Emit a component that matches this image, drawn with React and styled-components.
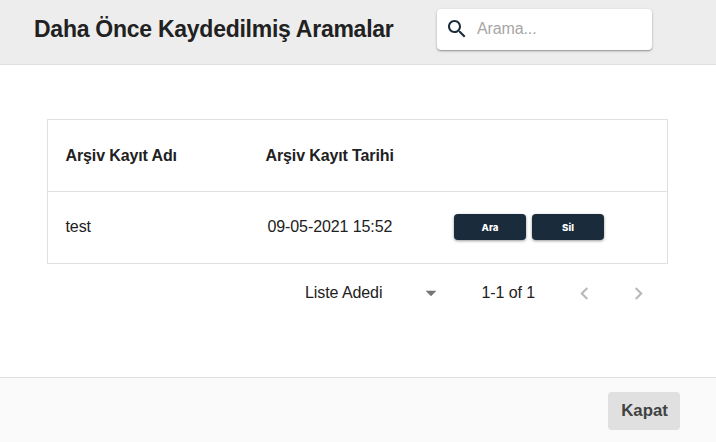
import React from "react";
import styled, { createGlobalStyle } from "styled-components";

const GlobalStyle = createGlobalStyle`
  *, *::before, *::after { box-sizing: border-box; }
  body { margin: 0; font-family: "Liberation Sans", Arial, sans-serif; color: #212121; }
`;

const Dialog = styled.div`
  display: flex;
  flex-direction: column;
  width: 716px;
  height: 442px;
  background: #fff;
  overflow: hidden;
`;

const Header = styled.header`
  display: flex;
  align-items: flex-start;
  height: 65px;
  padding-left: 34px;
  background: #ededed;
  border-bottom: 1px solid #e0e0e0;
`;

const Title = styled.h1`
  margin: 16px 0 0;
  width: 403px;
  font-size: 23px;
  line-height: 27px;
  font-weight: 700;
  letter-spacing: -0.26px;
  white-space: nowrap;
`;

const SearchBox = styled.label`
  display: flex;
  align-items: center;
  gap: 8px;
  width: 215px;
  height: 41px;
  margin-top: 9px;
  padding: 0 0 2px 8px;
  background: #fff;
  border-radius: 4px;
  box-shadow: 0 1px 3px rgba(0, 0, 0, 0.24), 0 1px 1px rgba(0, 0, 0, 0.2);
`;

const SearchInput = styled.input`
  width: 160px;
  padding: 0;
  border: 0;
  outline: 0;
  background: transparent;
  font: 16px "Liberation Sans", Arial, sans-serif;
  letter-spacing: -0.12px;
  &::placeholder { color: #a6a6a6; opacity: 1; }
`;

const Content = styled.main`
  flex: 1;
  padding: 54px 48px 0 47px;
`;

const Table = styled.div`
  border: 1px solid #e0e0e0;
`;

const Row = styled.div`
  display: grid;
  grid-template-columns: 200px 188.5px 1fr;
  align-items: center;
  height: ${(p) => (p.$head ? 71 : 72)}px;
  padding-left: 17.5px;
  padding-bottom: ${(p) => (p.$head ? 0 : 2)}px;
  border-top: ${(p) => (p.$head ? "0" : "1px solid #e0e0e0")};
  font-size: 16px;
  font-weight: ${(p) => (p.$head ? 700 : 400)};
  letter-spacing: ${(p) => (p.$head ? -0.12 : -0.1)}px;
`;

const Cell = styled.div`
  padding-left: ${(p) => p.$indent || 0}px;
  white-space: nowrap;
`;

const Actions = styled.div`
  display: flex;
  gap: 6px;
`;

const ActionButton = styled.button`
  width: 72px;
  height: 26px;
  padding: 2px 0 0;
  border: 0;
  border-radius: 4px;
  background: #1a2b3c;
  color: #fff;
  font: 800 9.6px Inter, sans-serif;
  box-shadow: 0 1px 3px rgba(0, 0, 0, 0.4);
`;

const Pagination = styled.div`
  display: flex;
  align-items: center;
  height: 58px;
  padding-left: 258px;
  font-size: 16px;
  letter-spacing: -0.08px;
`;

const PageSize = styled.div`
  display: flex;
  flex: none;
  align-items: center;
  justify-content: space-between;
  width: 139px;
`;

const PageRange = styled.span`
  flex: none;
  width: 90px;
  margin-left: 37.5px;
`;

const PageButton = styled.button`
  display: flex;
  flex: none;
  width: 25px;
  height: 25px;
  margin-right: 29px;
  padding: 0;
  border: 0;
  background: none;
  color: #b8b8b8;
  &:last-child { margin-right: 0; }
`;

const Footer = styled.footer`
  display: flex;
  justify-content: flex-end;
  height: 65px;
  padding: 14px 36px 0 0;
  background: #fafafa;
  border-top: 1px solid #e0e0e0;
`;

const CloseButton = styled.button`
  width: 72px;
  height: 38px;
  padding: 0 0 1px 1px;
  border: 0;
  border-radius: 4px;
  background: #e0e0e0;
  color: #424242;
  font: 700 16.8px "Liberation Sans", Arial, sans-serif;
`;

const Icon = ({ d, size = 24, color = "currentColor" }) => (
  <svg width={size} height={size} viewBox="0 0 24 24" fill={color} aria-hidden="true">
    <path d={d} />
  </svg>
);

const icons = {
  search: "M15.5 14h-.79l-.28-.27C15.41 12.59 16 11.11 16 9.5 16 5.91 13.09 3 9.5 3S3 5.91 3 9.5 5.91 16 9.5 16c1.61 0 3.09-.59 4.23-1.57l.27.28v.79l5 4.99L20.49 19l-4.99-5zm-6 0C7.01 14 5 11.99 5 9.5S7.01 5 9.5 5 14 7.01 14 9.5 11.99 14 9.5 14z",
  down: "M7 10l5 5 5-5z",
  left: "M15.41 7.41L14 6l-6 6 6 6 1.41-1.41L10.83 12z",
  right: "M10 6L8.59 7.41 13.17 12l-4.58 4.59L10 18l6-6z",
};

const records = [{ name: "test", date: "09-05-2021 15:52" }];

export default function App() {
  return (
    <>
      <GlobalStyle />
      <Dialog>
        <Header>
          <Title>Daha Önce Kaydedilmiş Aramalar</Title>
          <SearchBox>
            <Icon d={icons.search} color="#1a2b3c" />
            <SearchInput placeholder="Arama..." />
          </SearchBox>
        </Header>
        <Content>
          <Table>
            <Row $head>
              <Cell>Arşiv Kayıt Adı</Cell>
              <Cell>Arşiv Kayıt Tarihi</Cell>
            </Row>
            {records.map((r) => (
              <Row key={r.name}>
                <Cell>{r.name}</Cell>
                <Cell $indent={2}>{r.date}</Cell>
                <Actions>
                  <ActionButton>Ara</ActionButton>
                  <ActionButton>Sil</ActionButton>
                </Actions>
              </Row>
            ))}
          </Table>
          <Pagination>
            <PageSize>
              <span>Liste Adedi</span>
              <Icon d={icons.down} size={26} color="#757575" />
            </PageSize>
            <PageRange>1-1 of 1</PageRange>
            <PageButton aria-label="Previous page"><Icon d={icons.left} size={25} /></PageButton>
            <PageButton aria-label="Next page"><Icon d={icons.right} size={25} /></PageButton>
          </Pagination>
        </Content>
        <Footer>
          <CloseButton>Kapat</CloseButton>
        </Footer>
      </Dialog>
    </>
  );
}
